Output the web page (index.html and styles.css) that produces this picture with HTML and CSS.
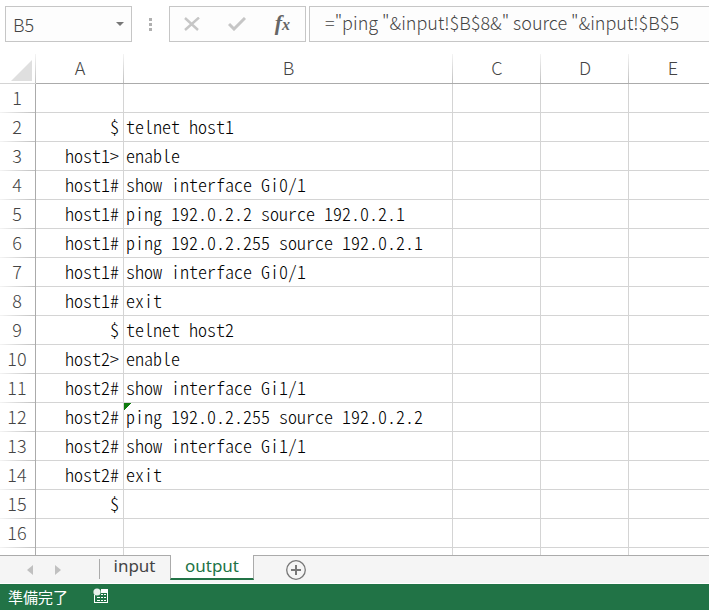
FILE: index.html
```html
<!DOCTYPE html>
<html lang="ja">
<head>
    <meta charset="UTF-8">
    <meta name="viewport" content="width=device-width, initial-scale=1.0">
    <title>output</title>
    <link rel="stylesheet" href="styles.css">
</head>
<body>
    <div class="formula-bar">
        <div class="name-box">
            <input type="text" class="name-input" aria-label="Name Box" value="B5">
            <button type="button" class="name-arrow" aria-label="Open name list">
                <svg width="8" height="5" viewBox="0 0 8 5"><path d="M0 0h8L4 4z" fill="#777"/></svg>
            </button>
        </div>
        <svg class="grip" width="3" height="13" viewBox="0 0 3 13"><path d="M0 0h3v3H0zM0 5h3v3H0zM0 10h3v3H0z" fill="#b0b0b0"/></svg>
        <div class="formula-buttons">
            <button type="button" aria-label="Cancel">
                <svg width="16" height="14" viewBox="0 0 16 14"><path d="M1 1l13 12M15 0.500L1 13" fill="none" stroke="#c6c6c6" stroke-width="2.400"/></svg>
            </button>
            <button type="button" aria-label="Enter">
                <svg width="18" height="14" viewBox="0 0 18 14"><path d="M1 7l5 5L17 1" fill="none" stroke="#c6c6c6" stroke-width="3"/></svg>
            </button>
            <button type="button" class="fx" aria-label="Insert Function"><i>f<small>x</small></i></button>
        </div>
        <input type="text" class="formula-input" aria-label="Formula" value="=&quot;ping &quot;&amp;input!$B$8&amp;&quot; source &quot;&amp;input!$B$5">
    </div>

    <div class="sheet">
        <table>
            <colgroup>
                <col class="col-num">
                <col class="col-cell">
                <col class="col-wide">
                <col class="col-cell">
                <col class="col-cell">
                <col class="col-cell">
            </colgroup>
            <thead>
                <tr>
                    <th class="corner"><svg width="21" height="21" viewBox="0 0 21 21"><path d="M21 0v21H0z" fill="#dfdfdf"/></svg></th>
                    <th>A</th><th>B</th><th>C</th><th>D</th><th>E</th>
                </tr>
            </thead>
            <tbody>
                <tr><th>1</th><td></td><td></td><td></td><td></td><td></td></tr>
                <tr><th>2</th><td class="prompt">$</td><td>telnet host1</td><td></td><td></td><td></td></tr>
                <tr><th>3</th><td class="prompt">host1&gt;</td><td>enable</td><td></td><td></td><td></td></tr>
                <tr><th>4</th><td class="prompt">host1#</td><td>show interface Gi0/1</td><td></td><td></td><td></td></tr>
                <tr><th>5</th><td class="prompt">host1#</td><td>ping 192.0.2.2 source 192.0.2.1</td><td></td><td></td><td></td></tr>
                <tr><th>6</th><td class="prompt">host1#</td><td>ping 192.0.2.255 source 192.0.2.1</td><td></td><td></td><td></td></tr>
                <tr><th>7</th><td class="prompt">host1#</td><td>show interface Gi0/1</td><td></td><td></td><td></td></tr>
                <tr><th>8</th><td class="prompt">host1#</td><td>exit</td><td></td><td></td><td></td></tr>
                <tr><th>9</th><td class="prompt">$</td><td>telnet host2</td><td></td><td></td><td></td></tr>
                <tr><th>10</th><td class="prompt">host2&gt;</td><td>enable</td><td></td><td></td><td></td></tr>
                <tr><th>11</th><td class="prompt">host2#</td><td>show interface Gi1/1</td><td></td><td></td><td></td></tr>
                <tr><th>12</th><td class="prompt">host2#</td><td class="flagged">ping 192.0.2.255 source 192.0.2.2</td><td></td><td></td><td></td></tr>
                <tr><th>13</th><td class="prompt">host2#</td><td>show interface Gi1/1</td><td></td><td></td><td></td></tr>
                <tr><th>14</th><td class="prompt">host2#</td><td>exit</td><td></td><td></td><td></td></tr>
                <tr><th>15</th><td class="prompt">$</td><td></td><td></td><td></td><td></td></tr>
                <tr><th>16</th><td></td><td></td><td></td><td></td><td></td></tr>
                <tr><th></th><td></td><td></td><td></td><td></td><td></td></tr>
            </tbody>
        </table>
    </div>

    <div class="tab-bar">
        <div class="tab-nav">
            <button type="button" aria-label="Previous sheet"><svg width="6" height="10" viewBox="0 0 6 10"><path d="M6 0v10L0 5z" fill="#c0c0c0"/></svg></button>
            <button type="button" aria-label="Next sheet"><svg width="6" height="10" viewBox="0 0 6 10"><path d="M0 0v10l6-5z" fill="#c0c0c0"/></svg></button>
        </div>
        <button type="button" class="tab">input</button>
        <button type="button" class="tab active">output</button>
        <div class="tab-rest">
            <button type="button" aria-label="New sheet">
                <svg width="20" height="20" viewBox="0 0 20 20"><circle cx="10" cy="10" r="9.300" fill="none" stroke="#777" stroke-width="1.300"/><path d="M5 10h10M10 5v10" stroke="#777" stroke-width="2"/></svg>
            </button>
        </div>
    </div>

    <div class="status-bar">
        <span>準備完了</span>
        <button type="button" aria-label="Record macro">
            <svg width="16" height="16" viewBox="0 0 16 16">
                <path d="M8 1h7v14H1V7h1v7h12V5H8z" fill="#fff"/>
                <circle cx="4" cy="4" r="3.600" fill="#e8f1ec"/>
                <path d="M8 6h2v1H8zM11 6h2v1h-2zM4 9h3v1H4zM8 9h2v1H8zM11 9h2v1h-2zM4 12h3v1H4zM8 12h2v1H8zM11 12h2v1h-2z" fill="#fff"/>
            </svg>
        </button>
    </div>
</body>
</html>
```

FILE: styles.css
```css
* {
    box-sizing: border-box;
}

body {
    display: flex;
    flex-direction: column;
    height: 100vh;
    margin: 0;
    background-color: #fff;
    color: #444;
    font-family: "Noto Sans CJK JP", sans-serif;
    font-size: 18px;
    font-weight: 300;
    overflow: hidden;
}

button,
input {
    padding: 0;
    border: none;
    background: none;
    color: inherit;
    font: inherit;
}

svg {
    display: block;
}

.formula-bar {
    display: flex;
    flex: none;
    padding: 6px 0 12px 5px;
}

.name-box,
.formula-buttons,
.formula-input {
    height: 36px;
    border: 1px solid #c6c6c6;
    background-color: #fdfdfd;
}

.name-box {
    display: flex;
    width: 127px;
    padding: 0 7px;
}

.name-input {
    flex: 1;
    min-width: 0;
}

.grip {
    align-self: center;
    margin: 0 17px;
}

.formula-buttons {
    display: flex;
    justify-content: space-between;
    align-items: center;
    width: 137px;
    padding: 0 15px 0 14px;
    margin-right: 3px;
}

.fx {
    color: #666;
    font-family: "Liberation Serif", serif;
    font-size: 22px;
    font-weight: bold;
    line-height: 22px;
}

.fx small {
    font-size: 16px;
}

.formula-input {
    flex: 1;
    min-width: 0;
    padding: 0 0 4px 15px;
    border-right: none;
}

.sheet {
    flex: 1;
    min-height: 0;
    overflow: hidden;
}

table {
    width: 100%;
    min-width: 717px;
    table-layout: fixed;
    border-spacing: 0;
}

.col-num {
    width: 36px;
}

.col-cell {
    width: 88px;
}

.col-wide {
    width: 329px;
}

th,
td {
    height: 29px;
    line-height: 24px;
    white-space: nowrap;
}

th {
    padding: 0 0 4px;
    font-weight: 300;
}

/* header separators fade out towards the outer edge */
thead th {
    height: 30px;
    border-bottom: 1px solid #ababab;
    background: linear-gradient(#f4f4f4, #c0c0c0) no-repeat right / 1px 100%;
}

thead .corner {
    padding: 4px 0 0 11px;
    border-bottom-color: #d4d4d4;
}

tbody th {
    padding-right: 1px;
    border-right: 1px solid #ababab;
    background: linear-gradient(to right, #f4f4f4, #c0c0c0) no-repeat bottom / 100% 1px;
}

td {
    padding: 0 2px 2px;
    border-right: 1px solid #d4d4d4;
    border-bottom: 1px solid #d4d4d4;
    color: #000;
    font-feature-settings: "hwid";
}

.prompt {
    padding-right: 4px;
    text-align: right;
}

/* error marker in the top left corner of the cell */
.flagged {
    background: linear-gradient(135deg, #107c10 5px, transparent 5px) no-repeat;
}

.tab-bar {
    display: flex;
    flex: none;
    height: 29px;
    border-bottom: 1px solid #fff;
    background-color: #f5f5f5;
    font-family: "Noto Sans", sans-serif;
    font-size: 17px;
    font-weight: 400;
}

.tab-nav {
    display: flex;
    align-items: center;
    gap: 22px;
    width: 99px;
    padding-left: 27px;
    border-top: 1px solid #ababab;
}

.tab {
    width: 71px;
    padding-bottom: 8px;
    border-top: 1px solid #ababab;
    background: linear-gradient(#ababab, #ababab) no-repeat 0 3px / 1px 20px;
    line-height: 20px;
}

.tab.active {
    width: 84px;
    height: 25px;
    padding: 0 0 2px;
    border-right: 1px solid #ababab;
    border-bottom: 2px solid #217346;
    border-left: 1px solid #ababab;
    border-top: none;
    background: #fff;
    color: #217346;
}

.tab-rest {
    flex: 1;
    padding: 4px 0 0 32px;
    border-top: 1px solid #ababab;
}

.status-bar {
    display: flex;
    flex: none;
    align-items: center;
    gap: 25px;
    height: 26px;
    padding: 0 0 2px 8px;
    background-color: #217346;
    color: #fff;
    font-size: 15px;
    font-weight: 400;
}
```
